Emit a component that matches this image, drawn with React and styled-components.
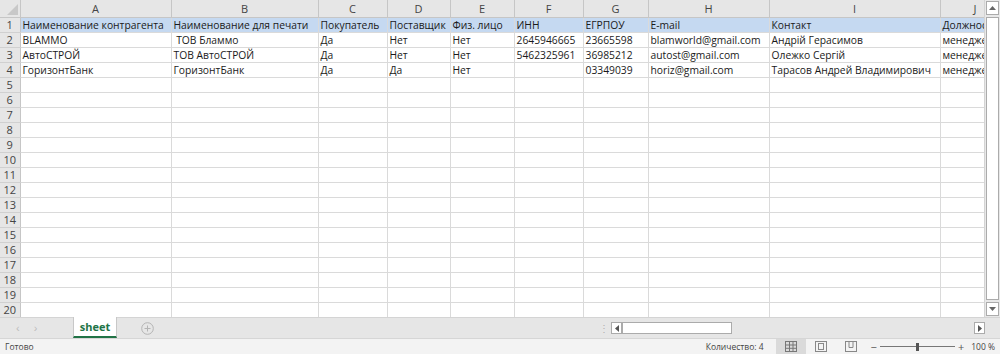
import styled, { createGlobalStyle } from "styled-components";

const GlobalStyle = createGlobalStyle`
  html, body {
    margin: 0;
    padding: 0;
    background: #fff;
  }
  body {
    font-family: "Liberation Sans", Arial, sans-serif;
  }
`;

const columns = [
  { key: "A", width: 151 },
  { key: "B", width: 147 },
  { key: "C", width: 69 },
  { key: "D", width: 63 },
  { key: "E", width: 64 },
  { key: "F", width: 69 },
  { key: "G", width: 65 },
  { key: "H", width: 121 },
  { key: "I", width: 171 },
  { key: "J", width: 70 },
];

const rows = [
  [
    "Наименование контрагента",
    "Наименование для печати",
    "Покупатель",
    "Поставщик",
    "Физ. лицо",
    "ИНН",
    "ЕГРПОУ",
    "E-mail",
    "Контакт",
    "Должность",
  ],
  ["BLAMMO", "\u00a0ТОВ Бламмо", "Да", "Нет", "Нет", "2645946665", "23665598", "blamworld@gmail.com", "Андрій Герасимов", "менеджер"],
  ["АвтоСТРОЙ", "ТОВ АвтоСТРОЙ", "Да", "Нет", "Нет", "5462325961", "36985212", "autost@gmail.com", "Олежко Сергій", "менеджер"],
  ["ГоризонтБанк", "ГоризонтБанк", "Да", "Да", "Нет", "", "03349039", "horiz@gmail.com", "Тарасов Андрей Владимирович", "менеджер"],
];

const TOTAL_ROWS = 20;

function App() {
  const body = Array.from({ length: TOTAL_ROWS }, (_, i) => rows[i] || []);

  return (
    <Window>
      <GlobalStyle />
      <SheetArea>
        <GridViewport>
          <Grid>
            <colgroup>
              <col style={{ width: 20 }} />
              {columns.map((c) => (
                <col key={c.key} style={{ width: c.width }} />
              ))}
            </colgroup>
            <thead>
              <tr>
                <Corner>
                  <CornerTriangle />
                </Corner>
                {columns.map((c) => (
                  <ColHead key={c.key}>{c.key}</ColHead>
                ))}
              </tr>
            </thead>
            <tbody>
              {body.map((r, i) => (
                <tr key={i}>
                  <RowHead>{i + 1}</RowHead>
                  {columns.map((c, j) => (
                    <Cell key={c.key} $header={i === 0}>
                      {r[j] || ""}
                    </Cell>
                  ))}
                </tr>
              ))}
            </tbody>
          </Grid>
        </GridViewport>
        <VScroll>
          <ArrowBox>
            <svg width="7" height="4" viewBox="0 0 7 4">
              <path d="M0 4 L3.5 0 L7 4 Z" fill="#666" />
            </svg>
          </ArrowBox>
          <VTrack>
            <VThumb />
          </VTrack>
          <ArrowBox>
            <svg width="7" height="4" viewBox="0 0 7 4">
              <path d="M0 0 L3.5 4 L7 0 Z" fill="#666" />
            </svg>
          </ArrowBox>
        </VScroll>
      </SheetArea>

      <TabBar>
        <TabNav>
          <NavArrow>‹</NavArrow>
          <NavArrow>›</NavArrow>
        </TabNav>
        <SheetTab>sheet</SheetTab>
        <AddSheet>
          <svg width="13" height="13" viewBox="0 0 13 13">
            <circle cx="6.5" cy="6.5" r="5.8" fill="none" stroke="#b4b4b4" strokeWidth="1" />
            <path d="M6.5 3.5 V9.5 M3.5 6.5 H9.5" stroke="#b4b4b4" strokeWidth="1" />
          </svg>
        </AddSheet>
        <Spacer />
        <Splitter>⋮</Splitter>
        <HScroll>
          <HArrow>
            <svg width="4" height="7" viewBox="0 0 4 7">
              <path d="M4 0 L0 3.5 L4 7 Z" fill="#555" />
            </svg>
          </HArrow>
          <HTrack>
            <HThumb />
          </HTrack>
          <HArrow>
            <svg width="4" height="7" viewBox="0 0 4 7">
              <path d="M0 0 L4 3.5 L0 7 Z" fill="#555" />
            </svg>
          </HArrow>
        </HScroll>
      </TabBar>

      <StatusBar>
        <StatusText>Готово</StatusText>
        <Spacer />
        <StatusText>Количество: 4</StatusText>
        <ViewButtons>
          <ViewButton $active>
            <svg width="12" height="11" viewBox="0 0 12 11">
              <rect x="0.5" y="0.5" width="11" height="10" fill="none" stroke="#777" />
              <path d="M4.5 0.5 V10.5 M8 0.5 V10.5 M0.5 4 H11.5 M0.5 7.3 H11.5" stroke="#777" />
            </svg>
          </ViewButton>
          <ViewButton>
            <svg width="12" height="11" viewBox="0 0 12 11">
              <rect x="0.5" y="0.5" width="11" height="10" fill="none" stroke="#888" />
              <rect x="3.5" y="2.5" width="5" height="6" fill="none" stroke="#888" />
            </svg>
          </ViewButton>
          <ViewButton>
            <svg width="12" height="11" viewBox="0 0 12 11">
              <rect x="0.5" y="0.5" width="11" height="10" fill="none" stroke="#888" />
              <path d="M4 0.5 V6.5 H8 V0.5" fill="none" stroke="#888" />
            </svg>
          </ViewButton>
        </ViewButtons>
        <Zoom>
          <ZoomSign>−</ZoomSign>
          <ZoomSlider>
            <ZoomLine />
            <ZoomKnob />
          </ZoomSlider>
          <ZoomSign>+</ZoomSign>
          <ZoomValue>100 %</ZoomValue>
        </Zoom>
      </StatusBar>
    </Window>
  );
}

const Window = styled.div`
  width: 1000px;
  height: 354px;
  display: flex;
  flex-direction: column;
  overflow: hidden;
  background: #fff;
`;

const SheetArea = styled.div`
  height: 317px;
  display: flex;
  border-bottom: 1px solid #d4d4d4;
`;

const GridViewport = styled.div`
  flex: 1;
  overflow: hidden;
`;

const Grid = styled.table`
  border-collapse: collapse;
  table-layout: fixed;
  width: 1010px;
  font-family: "Open Sans", "Liberation Sans", sans-serif;
  font-size: 10.3px;
  color: #111;

  td,
  th {
    height: 14px;
    padding: 0 0 0 2px;
    white-space: nowrap;
    overflow: hidden;
    line-height: 14px;
  }
`;

const Corner = styled.th`
  position: relative;
  background: #e6e6e6;
  border-right: 1px solid #c6c6c6;
  border-bottom: 1px solid #c6c6c6;
  && {
    height: 17px;
  }
`;

const CornerTriangle = styled.span`
  position: absolute;
  right: 2px;
  bottom: 2px;
  width: 0;
  height: 0;
  border-left: 11px solid transparent;
  border-bottom: 11px solid #c8c8c8;
`;

const ColHead = styled.th`
  background: #e6e6e6;
  border-right: 1px solid #c6c6c6;
  border-bottom: 1px solid #c6c6c6;
  font-weight: normal;
  font-size: 11px;
  text-align: center;
  color: #444;
  && {
    height: 17px;
    padding: 0;
  }
`;

const RowHead = styled.td`
  background: #e6e6e6;
  border-right: 1px solid #c6c6c6;
  border-bottom: 1px solid #d0d0d0;
  text-align: center;
  font-size: 11px;
  color: #444;
  && {
    padding: 0;
  }
`;

const Cell = styled.td`
  background: ${(p) => (p.$header ? "#c5d9f1" : "#fff")};
  border-right: 1px solid #dadada;
  border-bottom: 1px solid #dadada;
  color: #1a1a1a;
`;

const VScroll = styled.div`
  width: 15px;
  display: flex;
  flex-direction: column;
  background: #e8e8e8;
  border-left: 1px solid #d4d4d4;
`;

const ArrowBox = styled.div`
  height: 14px;
  margin: 1px;
  display: flex;
  align-items: center;
  justify-content: center;
  background: #fff;
  border: 1px solid #ababab;
  box-sizing: border-box;
`;

const VTrack = styled.div`
  flex: 1;
  padding: 1px;
  display: flex;
  flex-direction: column;
`;

const VThumb = styled.div`
  flex: 1;
  background: #fff;
  border: 1px solid #ababab;
`;

const TabBar = styled.div`
  height: 20px;
  display: flex;
  align-items: stretch;
  background: #e6e6e6;
  border-bottom: 1px solid #d6d6d6;
`;

const TabNav = styled.div`
  width: 73px;
  display: flex;
  align-items: center;
  padding-left: 16px;
  gap: 14px;
  box-sizing: border-box;
`;

const NavArrow = styled.span`
  font-family: "Liberation Sans", sans-serif;
  font-size: 11px;
  color: #bcbcbc;
`;

const SheetTab = styled.div`
  width: 42px;
  margin-top: -1px;
  display: flex;
  align-items: center;
  justify-content: center;
  background: #fff;
  border-left: 1px solid #c8c8c8;
  border-right: 1px solid #c8c8c8;
  border-bottom: 2px solid #217346;
  font-family: "Open Sans", sans-serif;
  font-weight: bold;
  font-size: 11px;
  color: #217346;
`;

const AddSheet = styled.div`
  width: 60px;
  display: flex;
  align-items: center;
  justify-content: center;
`;

const Spacer = styled.div`
  flex: 1;
`;

const Splitter = styled.div`
  width: 14px;
  display: flex;
  align-items: center;
  justify-content: center;
  font-size: 10px;
  color: #b0b0b0;
`;

const HScroll = styled.div`
  width: 374px;
  display: flex;
  align-items: center;
  padding-right: 15px;
`;

const HArrow = styled.div`
  width: 11px;
  height: 12px;
  display: flex;
  align-items: center;
  justify-content: center;
  background: #fff;
  border: 1px solid #ababab;
  box-sizing: border-box;
`;

const HTrack = styled.div`
  flex: 1;
  height: 12px;
  display: flex;
`;

const HThumb = styled.div`
  width: 110px;
  background: #fff;
  border: 1px solid #ababab;
  box-sizing: border-box;
`;

const StatusBar = styled.div`
  flex: 1;
  display: flex;
  align-items: center;
  background: #f3f3f3;
  padding-left: 5px;
  font-family: "Open Sans", sans-serif;
  font-size: 8.5px;
  color: #444;
`;

const StatusText = styled.span`
  white-space: nowrap;
`;

const ViewButtons = styled.div`
  display: flex;
  align-self: stretch;
  margin-left: 12px;
`;

const ViewButton = styled.div`
  width: 30px;
  display: flex;
  align-items: center;
  justify-content: center;
  background: ${(p) => (p.$active ? "#dadada" : "transparent")};
`;

const Zoom = styled.div`
  display: flex;
  align-items: center;
  margin-left: 5px;
  gap: 3px;
`;

const ZoomSign = styled.span`
  font-size: 11px;
  color: #555;
`;

const ZoomSlider = styled.div`
  position: relative;
  width: 75px;
  height: 10px;
  display: flex;
  align-items: center;
`;

const ZoomLine = styled.div`
  width: 100%;
  height: 1px;
  background: #777;
`;

const ZoomKnob = styled.div`
  position: absolute;
  left: 36px;
  top: 1px;
  width: 3px;
  height: 8px;
  background: #555;
`;

const ZoomValue = styled.span`
  margin-left: 4px;
  margin-right: 5px;
  color: #444;
`;

export default App;
